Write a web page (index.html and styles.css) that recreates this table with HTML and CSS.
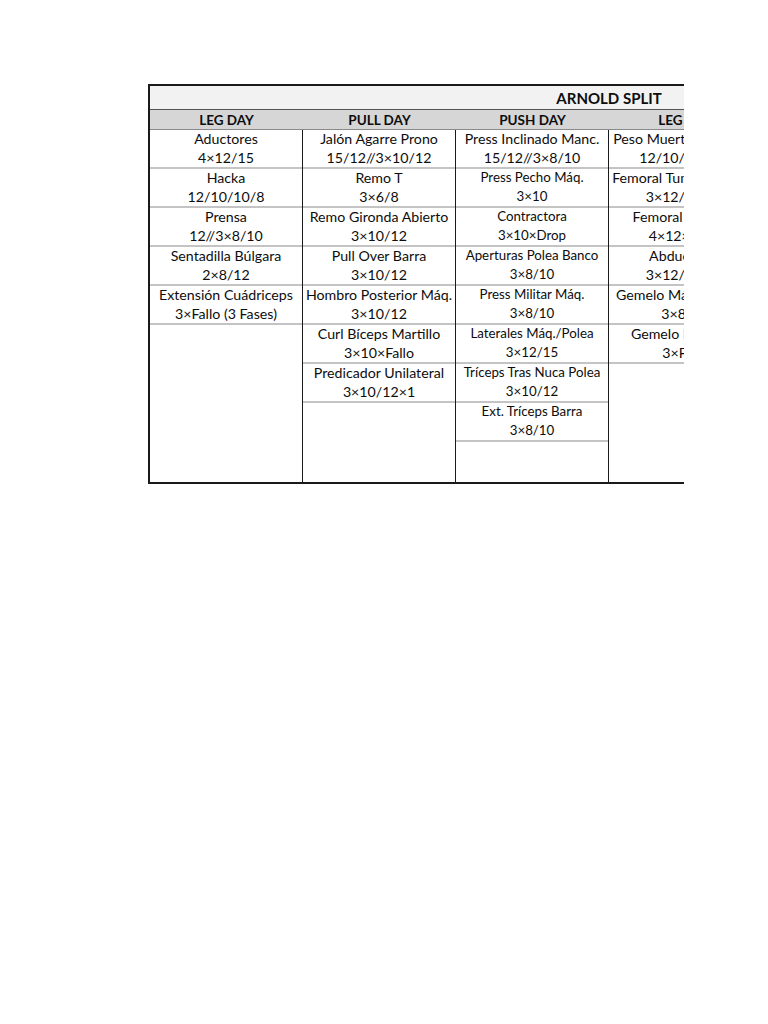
FILE: index.html
```html
<!DOCTYPE html>
<html>
<head>
<meta charset="utf-8">
<link rel="stylesheet" href="styles.css">
</head>
<body>
<div class="sheet">
  <div class="table">
    <div class="title">ARNOLD SPLIT</div>
    <div class="headers">
      <div class="hcell">LEG DAY</div>
      <div class="hcell">PULL DAY</div>
      <div class="hcell">PUSH DAY</div>
      <div class="hcell">LEG DAY</div>
      <div class="hcell"></div>
      <div class="hcell"></div>
    </div>
    <div class="cols">
      <div class="col">
        <div class="cell"><span>Aductores</span><span>4×12/15</span></div>
        <div class="cell"><span>Hacka</span><span>12/10/10/8</span></div>
        <div class="cell"><span>Prensa</span><span>12//3×8/10</span></div>
        <div class="cell"><span>Sentadilla Búlgara</span><span>2×8/12</span></div>
        <div class="cell"><span>Extensión Cuádriceps</span><span>3×Fallo (3 Fases)</span></div>
      </div>
      <div class="col">
        <div class="cell"><span>Jalón Agarre Prono</span><span>15/12//3×10/12</span></div>
        <div class="cell"><span>Remo T</span><span>3×6/8</span></div>
        <div class="cell"><span>Remo Gironda Abierto</span><span>3×10/12</span></div>
        <div class="cell"><span>Pull Over Barra</span><span>3×10/12</span></div>
        <div class="cell"><span>Hombro Posterior Máq.</span><span>3×10/12</span></div>
        <div class="cell"><span>Curl Bíceps Martillo</span><span>3×10×Fallo</span></div>
        <div class="cell"><span>Predicador Unilateral</span><span>3×10/12×1</span></div>
      </div>
      <div class="col">
        <div class="cell"><span>Press Inclinado Manc.</span><span>15/12//3×8/10</span></div>
        <div class="cell small"><span>Press Pecho Máq.</span><span>3×10</span></div>
        <div class="cell small"><span>Contractora</span><span>3×10×Drop</span></div>
        <div class="cell small"><span>Aperturas Polea Banco</span><span>3×8/10</span></div>
        <div class="cell small"><span>Press Militar Máq.</span><span>3×8/10</span></div>
        <div class="cell small"><span>Laterales Máq./Polea</span><span>3×12/15</span></div>
        <div class="cell small"><span>Tríceps Tras Nuca Polea</span><span>3×10/12</span></div>
        <div class="cell small"><span>Ext. Tríceps Barra</span><span>3×8/10</span></div>
      </div>
      <div class="col">
        <div class="cell"><span>Peso Muerto Unilateral</span><span>12/10/10/8/6</span></div>
        <div class="cell"><span>Femoral Tumbado Máq.</span><span>3×12/15/20</span></div>
        <div class="cell"><span>Femoral Sentado</span><span>4×12×Drop</span></div>
        <div class="cell"><span>Abductores</span><span>3×12/15/20</span></div>
        <div class="cell"><span>Gemelo Máq. Sentado</span><span>3×8/10</span></div>
        <div class="cell"><span>Gemelo Inclinado</span><span>3×Fallo</span></div>
      </div>
      <div class="col"></div>
      <div class="col"></div>
    </div>
  </div>
</div>
</body>
</html>
```

FILE: styles.css
```css
html, body {
  margin: 0;
  padding: 0;
  background: #ffffff;
}

body {
  font-family: Lato, "Liberation Sans", sans-serif;
  color: #0d0d0d;
}

.sheet {
  margin: 84px 0 0 148px;
  width: 536px;
  overflow: hidden;
}

.table {
  width: 918px;
  border-top: 2px solid #1a1a1a;
  border-left: 2px solid #1a1a1a;
  border-bottom: 2px solid #1a1a1a;
}

.title {
  height: 23px;
  background: #f2f2f2;
  border-bottom: 1px solid #555555;
  display: flex;
  align-items: center;
  justify-content: center;
  font-weight: bold;
  font-size: 15px;
}

.headers {
  display: grid;
  grid-template-columns: repeat(6, 153px);
  background: #d6d6d6;
  height: 19px;
  border-bottom: 1px solid #8a8a8a;
}

.hcell {
  display: flex;
  align-items: center;
  justify-content: center;
  font-weight: bold;
  font-size: 13.5px;
}

.cols {
  display: grid;
  grid-template-columns: repeat(6, 153px);
  height: 352px;
}

.col {
  display: flex;
  flex-direction: column;
  border-right: 1px solid #1a1a1a;
}

.cell {
  height: 37px;
  border-bottom: 2px solid #c4c4c4;
  display: flex;
  flex-direction: column;
  align-items: center;
  font-size: 14.2px;
  line-height: 19px;
  white-space: nowrap;
}

.cell span:first-child {
  margin-top: -1px;
}

.cell.small {
  font-size: 13.3px;
}
```
